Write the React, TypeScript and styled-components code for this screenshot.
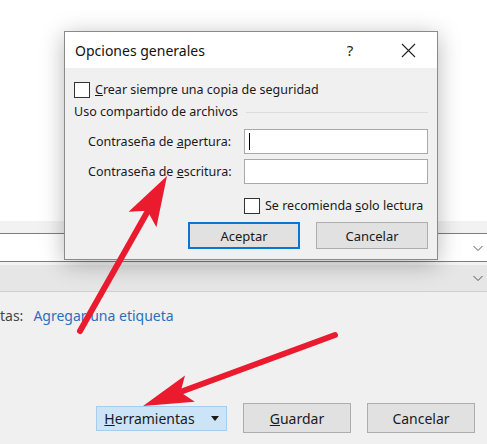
import React from "react";
import styled, { createGlobalStyle } from "styled-components";

const GlobalStyle = createGlobalStyle`
  html, body {
    margin: 0;
    padding: 0;
    background: #ffffff;
    overflow: hidden;
  }
  body {
    font-family: "Noto Sans", "Open Sans", Arial, sans-serif;
    color: #1a1a1a;
  }
`;

const Page = styled.div`
  position: relative;
  width: 487px;
  height: 444px;
  display: flex;
  flex-direction: column;
  background: #f0f0f0;
  overflow: hidden;
`;

const DocArea = styled.div`
  height: 221px;
  background: #ffffff;
`;

const Strip = styled.div`
  height: 12px;
  background: #f2f2f2;
  border-bottom: 1px solid #7d7d7d;
`;

const ComboRow = styled.div`
  height: 27px;
  background: #ffffff;
  border-bottom: 1px solid #7d7d7d;
  display: flex;
  align-items: center;
  justify-content: flex-end;
  padding-right: 2px;
`;

const Spacer = styled.div`
  height: 3px;
  background: #f3f3f3;
`;

const SectionHeader = styled.div`
  height: 26px;
  background: #e6e6e6;
  border-bottom: 1px solid #cfcfcf;
  display: flex;
  align-items: center;
  justify-content: flex-end;
  padding-right: 2px;
`;

const Chevron = styled.svg`
  width: 14px;
  height: 14px;
`;

const TagsRow = styled.div`
  margin-top: 13px;
  height: 20px;
  display: flex;
  align-items: center;
  gap: 10px;
  font-size: 14px;
  white-space: nowrap;
`;

const TagLabel = styled.span`
  color: #444444;
`;

const TagLink = styled.span`
  color: #2a6fbd;
`;

const Footer = styled.div`
  margin-top: auto;
  padding: 0 12px 11px 0;
  display: flex;
  align-items: center;
  justify-content: flex-end;
  gap: 16px;
`;

const WinButton = styled.div<{ $w: number; $h: number; $selected?: boolean }>`
  box-sizing: border-box;
  width: ${(p) => p.$w}px;
  height: ${(p) => p.$h}px;
  display: flex;
  align-items: center;
  justify-content: center;
  gap: 16px;
  font-size: 14px;
  color: #1a1a1a;
  white-space: nowrap;
  background: ${(p) => (p.$selected ? "#cce4f7" : "#e1e1e1")};
  border: 1px solid ${(p) => (p.$selected ? "#a6cdee" : "#adadad")};
`;

const DropTriangle = styled.span`
  width: 0;
  height: 0;
  border-left: 4.5px solid transparent;
  border-right: 4.5px solid transparent;
  border-top: 5px solid #1a1a1a;
  margin-top: 1px;
`;

const Dialog = styled.div`
  position: absolute;
  left: 64px;
  top: 31px;
  box-sizing: border-box;
  width: 374px;
  height: 229px;
  border: 1px solid #8a8a8a;
  background: #f0f0f0;
  box-shadow: 0 4px 22px rgba(0, 0, 0, 0.28);
  display: flex;
  flex-direction: column;
`;

const TitleBar = styled.div`
  height: 36px;
  background: #ffffff;
  display: flex;
  align-items: center;
  padding: 0 0 0 10px;
  font-size: 14px;
  color: #111111;
`;

const Title = styled.span`
  flex: 1;
`;

const TitleButton = styled.span`
  width: 58px;
  display: flex;
  justify-content: center;
  align-items: center;
  font-size: 15px;
  color: #222222;
`;

const Body = styled.div`
  flex: 1;
  padding: 13px 9px 0 9px;
  display: flex;
  flex-direction: column;
  font-size: 12.5px;
  white-space: nowrap;
`;

const CheckRow = styled.div<{ $indent?: number; $top?: number }>`
  height: 17px;
  display: flex;
  align-items: center;
  gap: 5px;
  margin-left: ${(p) => p.$indent ?? 0}px;
  margin-top: ${(p) => p.$top ?? 0}px;
`;

const Box = styled.span`
  box-sizing: border-box;
  flex: none;
  width: 16px;
  height: 16px;
  background: #ffffff;
  border: 1px solid #333333;
`;

const GroupHeader = styled.div`
  margin-top: 5px;
  height: 17px;
  display: flex;
  align-items: center;
  gap: 8px;
  color: #1a1a1a;
`;

const GroupLine = styled.span`
  flex: 1;
  height: 1px;
  background: #dcdcdc;
  margin-top: 2px;
`;

const FieldRow = styled.div<{ $top: number }>`
  margin-top: ${(p) => p.$top}px;
  height: 25px;
  display: flex;
  align-items: center;
  padding-left: 14px;
`;

const FieldLabel = styled.span`
  flex: 1;
`;

const Input = styled.div`
  box-sizing: border-box;
  width: 184px;
  height: 25px;
  background: #ffffff;
  border: 1px solid #a9a9a9;
  display: flex;
  align-items: center;
  padding-left: 4px;
`;

const Caret = styled.span`
  width: 1px;
  height: 17px;
  background: #000000;
`;

const ButtonRow = styled.div`
  margin-top: 8px;
  display: flex;
  justify-content: flex-end;
  gap: 16px;
`;

const DialogButton = styled.div<{ $default?: boolean }>`
  box-sizing: border-box;
  width: 112px;
  height: 27px;
  display: flex;
  align-items: center;
  justify-content: center;
  font-size: 13px;
  background: #e1e1e1;
  border: ${(p) => (p.$default ? "2px solid #0a75d2" : "1px solid #adadad")};
`;

const Overlay = styled.svg`
  position: absolute;
  left: 0;
  top: 0;
  width: 487px;
  height: 444px;
  pointer-events: none;
`;

const ChevronDown = () => (
  <Chevron viewBox="0 0 14 14">
    <path d="M2.5 5 L7 9.5 L11.5 5" fill="none" stroke="#555" strokeWidth="1" />
  </Chevron>
);

const App = () => {
  return (
    <Page>
      <GlobalStyle />
      <DocArea />
      <Strip />
      <ComboRow>
        <ChevronDown />
      </ComboRow>
      <Spacer />
      <SectionHeader>
        <ChevronDown />
      </SectionHeader>
      <TagsRow>
        <TagLabel>tas:</TagLabel>
        <TagLink>Agregar una etiqueta</TagLink>
      </TagsRow>
      <Footer>
        <WinButton $w={131} $h={25} $selected>
          <span>
            <u>H</u>erramientas
          </span>
          <DropTriangle />
        </WinButton>
        <WinButton $w={108} $h={30}>
          <span>
            <u>G</u>uardar
          </span>
        </WinButton>
        <WinButton $w={108} $h={30}>
          <span>Cancelar</span>
        </WinButton>
      </Footer>

      <Dialog>
        <TitleBar>
          <Title>Opciones generales</Title>
          <TitleButton>?</TitleButton>
          <TitleButton>
            <svg width="15" height="15" viewBox="0 0 15 15">
              <path d="M1 1 L14 14 M14 1 L1 14" stroke="#222" strokeWidth="1.1" />
            </svg>
          </TitleButton>
        </TitleBar>
        <Body>
          <CheckRow>
            <Box />
            <span>
              <u>C</u>rear siempre una copia de seguridad
            </span>
          </CheckRow>
          <GroupHeader>
            <span>Uso compartido de archivos</span>
            <GroupLine />
          </GroupHeader>
          <FieldRow $top={9}>
            <FieldLabel>
              Contraseña de <u>a</u>pertura:
            </FieldLabel>
            <Input>
              <Caret />
            </Input>
          </FieldRow>
          <FieldRow $top={5}>
            <FieldLabel>
              Contraseña de <u>e</u>scritura:
            </FieldLabel>
            <Input />
          </FieldRow>
          <CheckRow $indent={170} $top={13}>
            <Box />
            <span>
              Se recomienda <u>s</u>olo lectura
            </span>
          </CheckRow>
          <ButtonRow>
            <DialogButton $default>Aceptar</DialogButton>
            <DialogButton>Cancelar</DialogButton>
          </ButtonRow>
        </Body>
      </Dialog>

      <Overlay viewBox="0 0 487 444">
        <line x1="80" y1="331" x2="149" y2="209" stroke="#ea1b2f" strokeWidth="6" strokeLinecap="round" />
        <polygon points="167,176 128.6,211.7 147.4,210.8 156.4,227.3" fill="#ea1b2f" />
        <line x1="335" y1="335" x2="183" y2="391" stroke="#ea1b2f" strokeWidth="6" strokeLinecap="round" />
        <polygon points="143,406 185,375.6 180.5,392.2 194.8,401.8" fill="#ea1b2f" />
      </Overlay>
    </Page>
  );
};

export default App;
